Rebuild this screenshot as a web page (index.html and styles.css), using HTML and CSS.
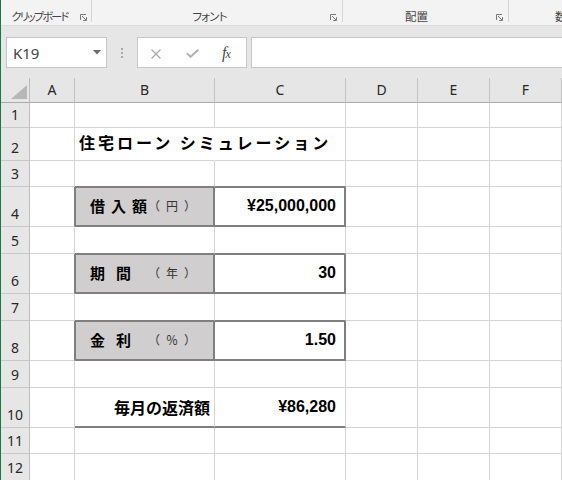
FILE: index.html
```html
<!DOCTYPE html>
<html lang="ja">
<head>
<meta charset="utf-8">
<title>住宅ローン シミュレーション</title>
<link rel="stylesheet" href="styles.css">
</head>
<body>
<div class="app">
  <div class="ribbon">
    <div class="grp g-clip">
      <span class="glabel">クリップボード</span>
      <svg class="launch" viewBox="0 0 7 7"><path d="M0.5 6V0.5H6" fill="none" stroke="#7a7a7a"/><path d="M2 2L6 6M6.5 3.2V6.5H3.2" fill="none" stroke="#7a7a7a"/></svg>
    </div>
    <div class="grp g-font">
      <span class="glabel">フォント</span>
      <svg class="launch" viewBox="0 0 7 7"><path d="M0.5 6V0.5H6" fill="none" stroke="#7a7a7a"/><path d="M2 2L6 6M6.5 3.2V6.5H3.2" fill="none" stroke="#7a7a7a"/></svg>
    </div>
    <div class="grp g-align">
      <span class="glabel">配置</span>
      <svg class="launch" viewBox="0 0 7 7"><path d="M0.5 6V0.5H6" fill="none" stroke="#7a7a7a"/><path d="M2 2L6 6M6.5 3.2V6.5H3.2" fill="none" stroke="#7a7a7a"/></svg>
    </div>
    <div class="grp g-num">
      <span class="glabel">数値</span>
    </div>
  </div>

  <div class="fbar">
    <div class="namebox">
      <span>K19</span>
      <svg class="caret" viewBox="0 0 8 5"><path d="M0 0H8L4 4.5Z" fill="#6b6b6b"/></svg>
    </div>
    <div class="sep">
      <svg class="dots" viewBox="0 0 2 10"><rect x="0" y="0" width="2" height="2" fill="#a9a9a9"/><rect x="0" y="4" width="2" height="2" fill="#a9a9a9"/><rect x="0" y="8" width="2" height="2" fill="#a9a9a9"/></svg>
    </div>
    <div class="fxbox">
      <svg class="ico-x" viewBox="0 0 10 10"><path d="M0.5 0.5L9.5 9.5M9.5 0.5L0.5 9.5" stroke="#ababab" stroke-width="1.3" fill="none"/></svg>
      <svg class="ico-ok" viewBox="0 0 13 9"><path d="M0.8 4.2L4.6 7.8L12.3 0.7" stroke="#b3b3b3" stroke-width="2" fill="none"/></svg>
      <span class="fx"><i>f</i><i class="fxx">x</i></span>
    </div>
    <div class="finput"></div>
  </div>

  <div class="sheet">
    <!-- header row -->
    <div class="cell corner"><svg class="tri" viewBox="0 0 16 14"><path d="M0 14H16V0Z" fill="#b7b7b7"/></svg></div>
    <div class="cell ch">A</div>
    <div class="cell ch">B</div>
    <div class="cell ch">C</div>
    <div class="cell ch">D</div>
    <div class="cell ch">E</div>
    <div class="cell ch">F</div>

    <!-- row 1 -->
    <div class="cell rh">1</div>
    <div class="cell"></div><div class="cell"></div><div class="cell"></div><div class="cell"></div><div class="cell"></div><div class="cell"></div>

    <!-- row 2 -->
    <div class="cell rh">2</div>
    <div class="cell"></div>
    <div class="cell title">住宅ローン シミュレーション</div>
    <div class="cell"></div><div class="cell"></div><div class="cell"></div><div class="cell"></div>

    <!-- row 3 -->
    <div class="cell rh">3</div>
    <div class="cell"></div>
    <div class="cell gb"></div>
    <div class="cell gb"></div>
    <div class="cell"></div><div class="cell"></div><div class="cell"></div>

    <!-- row 4 -->
    <div class="cell rh">4</div>
    <div class="cell gr"></div>
    <div class="cell lab bx bxl">
      <span class="big"><span>借</span><span>入</span><span>額</span></span>
      <span class="small"><span>（</span><span>円</span><span>）</span></span>
    </div>
    <div class="cell val bx bxt">¥25,000,000</div>
    <div class="cell"></div><div class="cell"></div><div class="cell"></div>

    <!-- row 5 -->
    <div class="cell rh">5</div>
    <div class="cell"></div>
    <div class="cell gb"></div>
    <div class="cell gb"></div>
    <div class="cell"></div><div class="cell"></div><div class="cell"></div>

    <!-- row 6 -->
    <div class="cell rh">6</div>
    <div class="cell gr"></div>
    <div class="cell lab bx bxl">
      <span class="big two"><span>期</span><span>間</span></span>
      <span class="small"><span>（</span><span>年</span><span>）</span></span>
    </div>
    <div class="cell val bx bxt">30</div>
    <div class="cell"></div><div class="cell"></div><div class="cell"></div>

    <!-- row 7 -->
    <div class="cell rh">7</div>
    <div class="cell"></div>
    <div class="cell gb"></div>
    <div class="cell gb"></div>
    <div class="cell"></div><div class="cell"></div><div class="cell"></div>

    <!-- row 8 -->
    <div class="cell rh">8</div>
    <div class="cell gr"></div>
    <div class="cell lab bx bxl">
      <span class="big two"><span>金</span><span>利</span></span>
      <span class="small"><span>（</span><span>％</span><span>）</span></span>
    </div>
    <div class="cell val bx bxt">1.50</div>
    <div class="cell"></div><div class="cell"></div><div class="cell"></div>

    <!-- row 9 -->
    <div class="cell rh">9</div>
    <div class="cell"></div><div class="cell"></div><div class="cell"></div><div class="cell"></div><div class="cell"></div><div class="cell"></div>

    <!-- row 10 -->
    <div class="cell rh">10</div>
    <div class="cell"></div>
    <div class="cell res bb2">毎月の返済額</div>
    <div class="cell val val-open bb2">¥86,280</div>
    <div class="cell"></div><div class="cell"></div><div class="cell"></div>

    <!-- row 11 -->
    <div class="cell rh">11</div>
    <div class="cell"></div><div class="cell"></div><div class="cell"></div><div class="cell"></div><div class="cell"></div><div class="cell"></div>

    <!-- row 12 -->
    <div class="cell rh">12</div>
    <div class="cell"></div><div class="cell"></div><div class="cell"></div><div class="cell"></div><div class="cell"></div><div class="cell"></div>
  </div>
</div>
</body>
</html>
```

FILE: styles.css
```css
* {
  box-sizing: border-box;
}

html,
body {
  margin: 0;
  padding: 0;
}

body {
  width: 562px;
  height: 480px;
  overflow: hidden;
  background: #ffffff;
  font-family: "Noto Sans", "Noto Sans CJK JP", sans-serif;
  color: #000;
}

.app {
  height: 480px;
  border-left: 1px solid #217346;
  display: flex;
  flex-direction: column;
}

/* ---------- ribbon ---------- */
.ribbon {
  flex: none;
  height: 26px;
  display: flex;
  background: #f3f3f3;
  border-bottom: 1px solid #dadada;
  overflow: hidden;
}

.grp {
  flex: none;
  height: 25px;
  display: flex;
  align-items: flex-end;
  background: linear-gradient(#d5d5d5, #d5d5d5) right top / 1px 22px no-repeat;
}

.g-clip {
  width: 91px;
}

.g-font {
  width: 251px;
}

.g-align {
  width: 166px;
}

.g-num {
  flex: 1 1 auto;
  min-width: 0;
  overflow: hidden;
  background: none;
}

.glabel {
  flex: 1;
  min-width: 0;
  text-align: center;
  font-family: "Noto Sans CJK JP", sans-serif;
  font-size: 11.5px;
  font-feature-settings: "palt";
  color: #444444;
  line-height: 16px;
  padding-bottom: 1px;
  white-space: nowrap;
}

.g-clip .glabel {
  font-size: 11px;
  letter-spacing: -1.7px;
  padding-right: 2px;
}

.g-font .glabel {
  letter-spacing: -0.8px;
  padding-right: 3px;
}

.g-align .glabel {
  padding-right: 6px;
}

.g-num .glabel {
  text-align: left;
  padding-left: 46px;
}

.launch {
  flex: none;
  width: 7px;
  height: 7px;
  margin: 0 5px 4px 0;
}

.g-font .launch,
.g-align .launch {
  margin-right: 6px;
}

/* ---------- formula bar ---------- */
.fbar {
  flex: none;
  height: 52px;
  background: #e6e6e6;
  display: flex;
  align-items: flex-start;
  padding-top: 11px;
  padding-left: 5px;
}

.namebox {
  flex: none;
  width: 101px;
  height: 31px;
  background: #ffffff;
  border: 1px solid #c6c6c6;
  display: flex;
  align-items: center;
  justify-content: space-between;
  padding: 0 5px 0 6px;
  font-size: 15px;
  color: #444444;
}

.caret {
  width: 8px;
  height: 5px;
  margin-bottom: 1px;
}

.sep {
  flex: none;
  width: 30px;
  height: 31px;
  display: flex;
  align-items: center;
  justify-content: center;
}

.dots {
  width: 2px;
  height: 10px;
}

.fxbox {
  flex: none;
  width: 110px;
  height: 31px;
  background: #ffffff;
  border: 1px solid #c6c6c6;
  display: flex;
  align-items: center;
  padding-left: 13px;
}

.ico-x {
  width: 10px;
  height: 10px;
  margin-top: 2px;
}

.ico-ok {
  width: 13px;
  height: 9px;
  margin-left: 25px;
  margin-top: 2px;
}

.fx {
  margin-left: 23px;
  font-family: "Liberation Serif", serif;
  color: #4a4a4a;
  font-size: 16px;
  line-height: 1;
}

.fxx {
  font-size: 12px;
  margin-left: -1px;
}

.finput {
  flex: 1;
  margin-left: 4px;
  height: 31px;
  background: #ffffff;
  border: 1px solid #c6c6c6;
  border-right: none;
}

/* ---------- sheet ---------- */
.sheet {
  display: grid;
  grid-template-columns: 29px 45px 140px 131px 72px 72px 72px;
  grid-template-rows: 25px 25px 33px 26px 40px 27px 40px 27px 40px 27px 40px 26px 27px;
}

.cell {
  display: flex;
  align-items: center;
  white-space: nowrap;
  border-right: 1px solid #d4d4d4;
  border-bottom: 1px solid #d4d4d4;
  min-width: 0;
}

.corner {
  background: #e6e6e6;
  border-right-color: #bdbdbd;
  border-bottom-color: #ababab;
  align-items: flex-end;
  justify-content: flex-end;
  padding: 0 2px 3px 0;
}

.tri {
  width: 16px;
  height: 14px;
}

.ch {
  background: #e6e6e6;
  justify-content: center;
  border-right-color: #c3c3c3;
  border-bottom-color: #ababab;
  font-size: 14px;
  line-height: 14px;
  color: #262626;
}

.rh {
  background: #e6e6e6;
  justify-content: center;
  align-items: flex-end;
  border-right-color: #bdbdbd;
  border-bottom-color: #c8c8c8;
  font-size: 14px;
  line-height: 14px;
  padding-bottom: 5px;
  color: #262626;
}

.title {
  border-right-color: transparent;
  padding-left: 4px;
  padding-bottom: 4px;
  font-family: "Noto Sans CJK JP", sans-serif;
  font-weight: bold;
  font-size: 16px;
  letter-spacing: 3px;
  overflow: visible;
}

/* thick box borders */
.gr {
  border-right-color: #7f7f7f;
}

.gb {
  border-bottom-color: #7f7f7f;
}

.bx {
  border-right: 2px solid #7f7f7f;
  border-bottom: 2px solid #7f7f7f;
}

.bxl {
  box-shadow: inset 1px 1px 0 #7f7f7f;
}

.bxt {
  box-shadow: inset 0 1px 0 #7f7f7f;
}

.bb2 {
  border-bottom: 2px solid #7f7f7f;
}

/* label cells */
.lab {
  background: #d0cece;
  padding-left: 15px;
  padding-right: 17px;
  font-family: "Noto Sans CJK JP", sans-serif;
}

.big {
  display: flex;
  justify-content: space-between;
  width: 57px;
  font-size: 15px;
  font-weight: bold;
  line-height: 20px;
  color: #000;
}

.big.two {
  width: 41px;
}

.small {
  display: flex;
  gap: 6px;
  margin-left: auto;
  font-size: 12px;
  line-height: 20px;
  color: #333333;
}

/* values */
.val {
  justify-content: flex-end;
  padding-right: 8px;
  font-family: "Liberation Sans", Arial, sans-serif;
  font-weight: bold;
  font-size: 16px;
  color: #000;
}

.val-open {
  padding-right: 9px;
}

.res {
  justify-content: flex-end;
  padding-right: 4px;
  font-family: "Noto Sans CJK JP", sans-serif;
  font-weight: bold;
  font-size: 16px;
  color: #000;
}
```
